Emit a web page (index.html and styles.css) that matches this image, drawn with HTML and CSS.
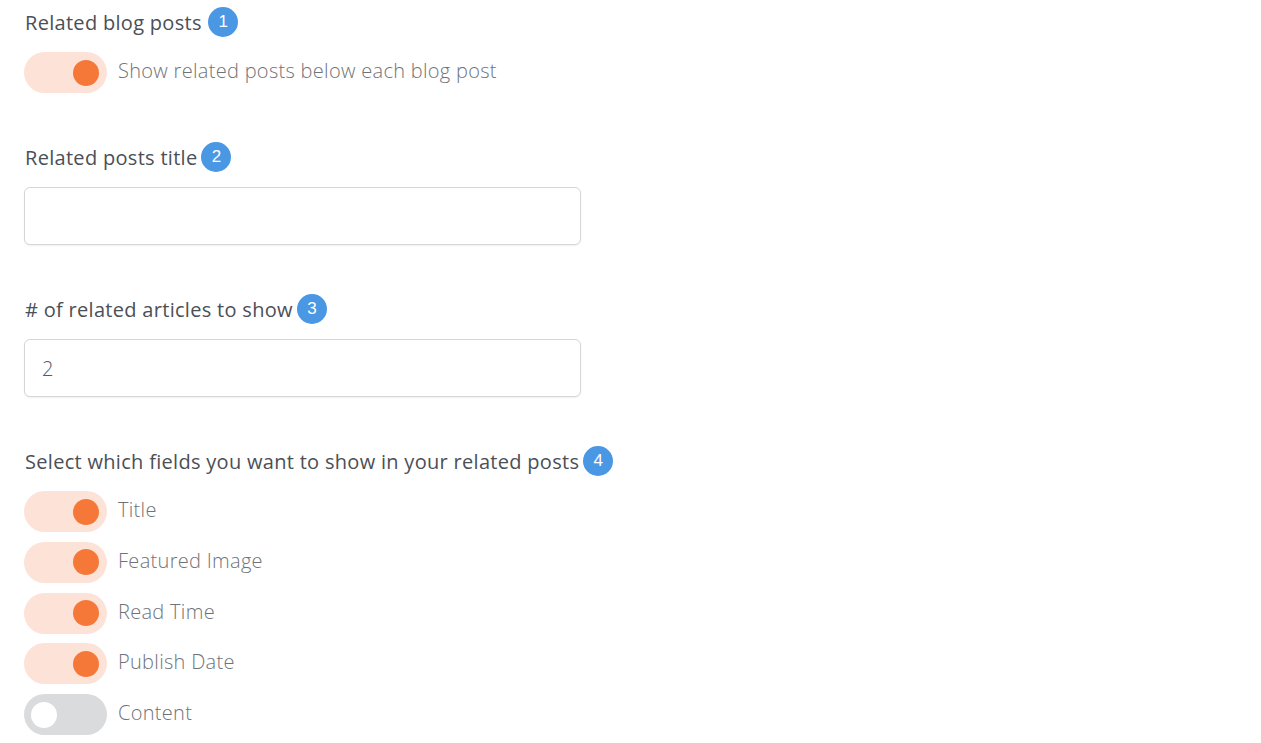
FILE: index.html
```html
<!DOCTYPE html>
<html lang="en">
<head>
<meta charset="UTF-8">
<meta name="viewport" content="width=device-width, initial-scale=1.0">
<title>Related posts settings</title>
<link rel="stylesheet" href="styles.css">
</head>
<body>

<div class="settings">

  <div class="section">
    <h2 class="heading">Related blog posts <span class="badge spaced">1</span></h2>
    <label class="toggle-row">
      <span class="toggle on"><span class="knob"></span></span>
      <span class="toggle-label">Show related posts below each blog post</span>
    </label>
  </div>

  <div class="section">
    <h2 class="heading">Related posts title<span class="badge">2</span></h2>
    <input type="text" class="field" value="">
  </div>

  <div class="section">
    <h2 class="heading"># of related articles to show<span class="badge">3</span></h2>
    <input type="text" class="field" value="2">
  </div>

  <div class="section">
    <h2 class="heading">Select which fields you want to show in your related posts<span class="badge">4</span></h2>
    <div class="toggle-list">
      <label class="toggle-row">
        <span class="toggle on"><span class="knob"></span></span>
        <span class="toggle-label">Title</span>
      </label>
      <label class="toggle-row">
        <span class="toggle on"><span class="knob"></span></span>
        <span class="toggle-label">Featured Image</span>
      </label>
      <label class="toggle-row">
        <span class="toggle on"><span class="knob"></span></span>
        <span class="toggle-label">Read Time</span>
      </label>
      <label class="toggle-row">
        <span class="toggle on"><span class="knob"></span></span>
        <span class="toggle-label">Publish Date</span>
      </label>
      <label class="toggle-row">
        <span class="toggle"><span class="knob"></span></span>
        <span class="toggle-label">Content</span>
      </label>
    </div>
  </div>

</div>

</body>
</html>
```

FILE: styles.css
```css
body {
  margin: 0;
  background-color: #ffffff;
  font-family: "Open Sans", Arial, sans-serif;
  color: #474b52;
}
.settings {
  padding: 7px 24px 0 24px;
}
.section {
  margin-bottom: 49px;
}
.heading {
  display: flex;
  align-items: center;
  height: 30px;
  margin: 0 0 15px 1px;
  font-size: 20px;
  font-weight: 400;
  letter-spacing: 0.3px;
  color: #4b4f56;
  white-space: pre;
}
.badge {
  display: inline-flex;
  align-items: center;
  justify-content: center;
  width: 30px;
  height: 30px;
  margin-left: 4px;
  border-radius: 50%;
  background-color: #4a97e4;
  color: #ffffff;
  font-family: Arial, sans-serif;
  font-size: 17px;
  letter-spacing: 0;
}
.badge.spaced {
  margin-left: 1px;
}
.field {
  display: block;
  box-sizing: border-box;
  width: 557px;
  height: 58px;
  padding: 0 17px;
  border: 1px solid #d6d6d6;
  border-radius: 6px;
  box-shadow: 0 1px 2px rgba(0, 0, 0, 0.06);
  font-family: "Open Sans", Arial, sans-serif;
  font-size: 20px;
  font-weight: 300;
  color: #555a60;
  outline: none;
}
.toggle-list {
  display: flex;
  flex-direction: column;
  gap: 9.75px;
}
.toggle-row {
  display: flex;
  align-items: center;
  gap: 11px;
}
.toggle {
  position: relative;
  width: 83px;
  height: 41px;
  border-radius: 21px;
  background-color: #dadbdd;
}
.toggle .knob {
  position: absolute;
  top: 7.5px;
  left: 7px;
  width: 26px;
  height: 26px;
  border-radius: 50%;
  background-color: #ffffff;
}
.toggle.on {
  background-color: #fde3d7;
}
.toggle.on .knob {
  left: auto;
  right: 8px;
  background-color: #f57838;
}
.toggle-label {
  margin-top: -4px;
  font-size: 20px;
  font-weight: 300;
  letter-spacing: 0.3px;
  color: #6f7378;
}
```
